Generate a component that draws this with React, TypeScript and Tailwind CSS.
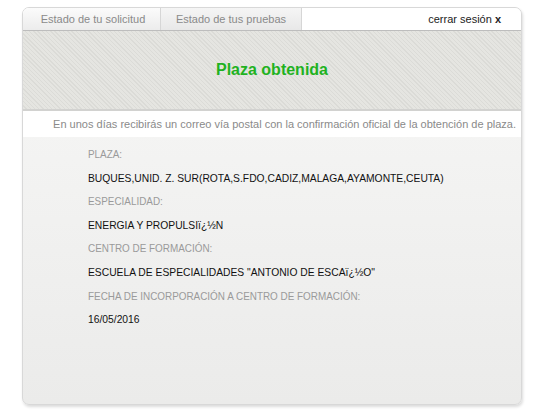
const FIELDS: { label: string; value: string }[] = [
  { label: 'PLAZA:', value: 'BUQUES,UNID. Z. SUR(ROTA,S.FDO,CADIZ,MALAGA,AYAMONTE,CEUTA)' },
  { label: 'ESPECIALIDAD:', value: 'ENERGIA Y PROPULSI\u00ef\u00bf\u00bdN' },
  { label: 'CENTRO DE FORMACIÓN:', value: 'ESCUELA DE ESPECIALIDADES "ANTONIO DE ESCA\u00ef\u00bf\u00bdO"' },
  { label: 'FECHA DE INCORPORACIÓN A CENTRO DE FORMACIÓN:', value: '16/05/2016' },
];

export default function App() {
  return (
    <div className="w-[540px] h-[420px] bg-white pt-[7px] pl-[22px] font-['Liberation_Sans',Arial,sans-serif]">
      <div className="w-[500px] h-[398px] flex flex-col rounded-[7px] border border-[#d8d8d8] shadow-[1px_2px_3px_rgba(0,0,0,0.14)] overflow-hidden bg-gradient-to-b from-[#f8f8f7] to-[#ebebea]">
        {/* Tabs */}
        <div className="flex h-[22px] shrink-0 bg-white text-[11px] leading-[22px]">
          <div className="w-[138px] pl-[3px] text-center text-[#8a8a8a] bg-gradient-to-b from-[#fbfbfb] to-[#ececec] border-r border-[#d6d6d6]">
            Estado de tu solicitud
          </div>
          <div className="w-[141px] text-center text-[#8a8a8a] bg-gradient-to-b from-[#f5f5f5] to-[#e8e8e8] border-r border-[#d6d6d6]">
            Estado de tus pruebas
          </div>
          <div className="flex-1 text-right pr-[20px] text-[#222]">
            cerrar sesión <span className="font-bold">x</span>
          </div>
        </div>

        {/* Header */}
        <div className="h-[81px] shrink-0 flex items-center justify-center border-t border-[#bdbdbd] border-b-2 border-b-[#d2d2d0] bg-[#e2e2de] bg-[repeating-linear-gradient(45deg,#e5e5e1_0px,#e5e5e1_2px,#dbdbd7_2px,#dbdbd7_3px)]">
          <h1 className="text-[16px] font-bold text-[#1fb21f]">Plaza obtenida</h1>
        </div>

        {/* Notice */}
        <div className="h-[26px] shrink-0 bg-white text-right pr-[5px] text-[11px] leading-[26px] text-[#8a8a8a]">
          En unos días recibirás un correo vía postal con la confirmación oficial de la obtención de plaza.
        </div>

        {/* Data */}
        <div className="flex flex-col pl-[65px] pt-[6px] leading-[23.6px]">
          {FIELDS.map((f) => (
            <div key={f.label}>
              <div className="text-[11px] text-[#9a9a9a] scale-x-[0.9] origin-left">{f.label}</div>
              <div className="text-[10.3px] text-[#111]">{f.value}</div>
            </div>
          ))}
        </div>
      </div>
    </div>
  );
}
